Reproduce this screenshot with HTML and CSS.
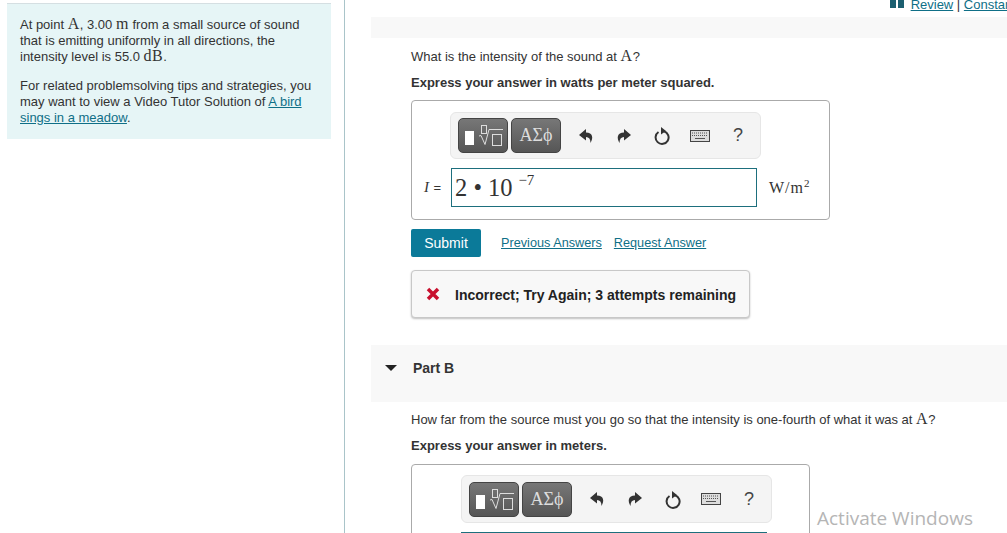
FILE: index.html
```html
<!DOCTYPE html>
<html lang="en">
<head>
    <meta charset="UTF-8">
    <meta name="viewport" content="width=device-width, initial-scale=1.0">
    <title>Part A and Part B</title>
    <link rel="stylesheet" href="styles.css">
</head>
<body>
    <aside class="sidebar">
        <div class="intro">
            <p>At point <span class="math">A</span>, 3.00 <span class="math">m</span> from a small source of sound that is emitting uniformly in all directions, the intensity level is 55.0 <span class="math">dB</span>.</p>
            <p>For related problemsolving tips and strategies, you may want to view a Video Tutor Solution of <a href="#">A bird sings in a meadow</a>.</p>
        </div>
    </aside>

    <main class="content">
        <div class="top-links">
            <svg class="book-icon" width="14" height="9" viewBox="0 0 14 9"><path d="M0 0h6v9H0zM8 0h6v9H8z" fill="#1c5f70"/></svg>
            <a href="#">Review</a> | <a href="#">Constants</a>
        </div>
        <div class="part-bar part-bar-top"></div>

        <section class="part-body">
            <p class="question">What is the intensity of the sound at <span class="math">A</span>?</p>
            <p class="instruction">Express your answer in watts per meter squared.</p>

            <div class="answer-box answer-box-a">
                <div class="toolbar">
                    <button class="tool-btn">
                        <svg width="48" height="33" viewBox="0 0 48 33">
                            <rect x="6" y="12" width="9" height="14" fill="#fff"/>
                            <rect x="22.500" y="6.500" width="5" height="8" fill="none" stroke="#ddd"/>
                            <path d="M20 17l2-.5 4 9 4-15h14" fill="none" stroke="#ddd"/>
                            <rect x="33.500" y="15.500" width="9" height="11" fill="none" stroke="#ddd"/>
                        </svg>
                    </button>
                    <button class="tool-btn tool-btn-text">ΑΣϕ</button>
                    <div class="tool-icons">
                        <span class="tool-icon"><svg width="16" height="16" viewBox="0 0 16 16"><path d="M8 1L1 7l7 5.500V9c3 0 4.500 2 4.500 6C15.500 10 15 4.500 8 4.500z" fill="#333"/></svg></span>
                        <span class="tool-icon"><svg width="16" height="16" viewBox="0 0 16 16"><path d="M8 1l7 6-7 5.500V9c-3 0-4.500 2-4.500 6C.5 10 1 4.500 8 4.500z" fill="#333"/></svg></span>
                        <span class="tool-icon"><svg width="18" height="19" viewBox="0 0 18 19"><path d="M11 5.200A6.500 6.500 0 1 1 5.500 6" fill="none" stroke="#333" stroke-width="2"/><path d="M8 1l5 4-5 3.500z" fill="#333"/></svg></span>
                        <span class="tool-icon"><svg width="20" height="12" viewBox="0 0 20 12"><rect x=".5" y=".5" width="19" height="11" fill="#ddd" stroke="#444"/><path d="M2 3h16M2 5.500h16" stroke="#555" stroke-dasharray="1 1"/><path d="M5 8.500h10" stroke="#555"/></svg></span>
                        <span class="tool-icon help">?</span>
                    </div>
                </div>
                <div class="answer-row">
                    <span class="var-label"><i>I</i> =</span>
                    <div class="answer-input">2 • 10<sup>− 7</sup></div>
                    <span class="unit">W/m<sup>2</sup></span>
                </div>
            </div>

            <div class="actions">
                <button class="submit">Submit</button>
                <a href="#">Previous Answers</a>
                <a href="#">Request Answer</a>
            </div>

            <div class="feedback">
                <svg width="14" height="14" viewBox="0 0 14 14"><path d="M2 2l10 10M12 2L2 12" stroke="#c8102e" stroke-width="3.500"/></svg>
                <span>Incorrect; Try Again; 3 attempts remaining</span>
            </div>
        </section>

        <div class="part-bar part-bar-b">
            <span class="caret"></span>
            <span class="part-title">Part B</span>
        </div>

        <section class="part-body part-body-b">
            <p class="question">How far from the source must you go so that the intensity is one-fourth of what it was at <span class="math">A</span>?</p>
            <p class="instruction">Express your answer in meters.</p>

            <div class="answer-box answer-box-b">
                <div class="toolbar">
                    <button class="tool-btn">
                        <svg width="48" height="33" viewBox="0 0 48 33">
                            <rect x="6" y="12" width="9" height="14" fill="#fff"/>
                            <rect x="22.500" y="6.500" width="5" height="8" fill="none" stroke="#ddd"/>
                            <path d="M20 17l2-.5 4 9 4-15h14" fill="none" stroke="#ddd"/>
                            <rect x="33.500" y="15.500" width="9" height="11" fill="none" stroke="#ddd"/>
                        </svg>
                    </button>
                    <button class="tool-btn tool-btn-text">ΑΣϕ</button>
                    <div class="tool-icons">
                        <span class="tool-icon"><svg width="16" height="16" viewBox="0 0 16 16"><path d="M8 1L1 7l7 5.500V9c3 0 4.500 2 4.500 6C15.500 10 15 4.500 8 4.500z" fill="#333"/></svg></span>
                        <span class="tool-icon"><svg width="16" height="16" viewBox="0 0 16 16"><path d="M8 1l7 6-7 5.500V9c-3 0-4.500 2-4.500 6C.5 10 1 4.500 8 4.500z" fill="#333"/></svg></span>
                        <span class="tool-icon"><svg width="18" height="19" viewBox="0 0 18 19"><path d="M11 5.200A6.500 6.500 0 1 1 5.500 6" fill="none" stroke="#333" stroke-width="2"/><path d="M8 1l5 4-5 3.500z" fill="#333"/></svg></span>
                        <span class="tool-icon"><svg width="20" height="12" viewBox="0 0 20 12"><rect x=".5" y=".5" width="19" height="11" fill="#ddd" stroke="#444"/><path d="M2 3h16M2 5.500h16" stroke="#555" stroke-dasharray="1 1"/><path d="M5 8.500h10" stroke="#555"/></svg></span>
                        <span class="tool-icon help">?</span>
                    </div>
                </div>
                <div class="answer-row">
                    <div class="answer-input"></div>
                </div>
            </div>
        </section>
    </main>

    <div class="watermark">Activate Windows</div>
</body>
</html>
```

FILE: styles.css
```css
html, body {
    height: 533px;
    overflow: hidden;
}

body {
    margin: 0;
    display: flex;
    font-family: "Liberation Sans", Arial, sans-serif;
    font-size: 13px;
    color: #333;
    background-color: #fff;
}

p {
    margin: 0;
}

a {
    color: #0f6f87;
}

.math {
    font-family: "Liberation Serif", serif;
    font-size: 16px;
    letter-spacing: 0.5px;
    line-height: 0;
}

/* Left column */
.sidebar {
    box-sizing: border-box;
    flex: 0 0 345px;
    height: 533px;
    padding: 3px 13px 0 7px;
    border-right: 1px solid #a9c4c9;
}

.intro {
    box-sizing: border-box;
    height: 136px;
    padding: 13px 13px 0;
    background-color: #e6f5f6;
    border-top: 1px solid #d5dfe2;
    line-height: 16px;
}

.intro p + p {
    margin-top: 13px;
}

/* Right column */
.content {
    flex: 1;
    min-width: 0;
    padding-left: 26px;
    overflow: hidden;
}

.top-links {
    height: 15px;
    margin-top: -2px;
    padding-left: 519px;
    font-size: 13px;
    line-height: 14px;
    white-space: nowrap;
}

.book-icon {
    margin-right: 3px;
    vertical-align: 1px;
}

.part-bar {
    background-color: #f8f8f8;
}

.part-bar-top {
    height: 21px;
    margin-top: 4px;
}

.part-bar-b {
    display: flex;
    align-items: center;
    height: 57px;
    margin-top: 27px;
    padding-bottom: 11px;
    box-sizing: border-box;
}

.caret {
    width: 0;
    height: 0;
    margin-left: 14px;
    border-left: 6px solid transparent;
    border-right: 6px solid transparent;
    border-top: 6px solid #222;
}

.part-title {
    margin-left: 16px;
    font-size: 14px;
    font-weight: bold;
    color: #333;
}

.part-body {
    padding: 11px 0 0 40px;
}

.part-body-b {
    padding-top: 10px;
}

.question {
    line-height: 16px;
}

.instruction {
    margin-top: 10px;
    font-weight: bold;
    line-height: 16px;
}

/* Answer box */
.answer-box {
    box-sizing: border-box;
    margin-top: 9px;
    border: 1px solid #aaa;
    border-radius: 4px;
}

.answer-box-a {
    width: 419px;
    height: 120px;
    padding: 11px 0 0 38px;
}

.answer-box-b {
    width: 399px;
    height: 140px;
    margin-top: 10px;
    padding: 10px 0 0 49px;
}

.answer-box-b .toolbar {
    height: 48px;
}

.toolbar {
    box-sizing: border-box;
    display: flex;
    align-items: center;
    gap: 3px;
    width: 311px;
    height: 47px;
    padding-left: 7px;
    background-color: #f4f4f4;
    border: 1px solid #e6e6e6;
    border-radius: 6px;
}

.tool-btn {
    box-sizing: border-box;
    display: flex;
    align-items: center;
    justify-content: center;
    width: 50px;
    height: 35px;
    padding: 0;
    color: #ddd;
    background: linear-gradient(#777, #565656);
    border: 1px solid #444;
    border-radius: 5px;
}

.tool-btn-text {
    font-family: "Liberation Serif", serif;
    font-size: 18px;
}

.tool-icons {
    display: flex;
    align-items: center;
    margin-left: 3px;
}

.tool-icon {
    display: flex;
    align-items: center;
    justify-content: center;
    width: 38px;
}

.help {
    font-size: 18px;
    color: #444;
}

.answer-row {
    display: flex;
    align-items: center;
    margin-top: 9px;
}

.answer-box-a .answer-row {
    margin-left: -26px;
}

.var-label {
    width: 27px;
    font-size: 13px;
    word-spacing: 1px;
}

.var-label i {
    font-family: "Liberation Serif", serif;
    font-size: 15px;
}

.answer-input {
    box-sizing: border-box;
    width: 306px;
    height: 39px;
    padding-left: 3px;
    font-family: "Liberation Serif", serif;
    font-size: 24.5px;
    line-height: 38px;
    color: #333;
    border: 1px solid #1d6f7d;
}

.answer-input sup {
    font-size: 15px;
    line-height: 0;
    vertical-align: 11px;
    margin-left: 6px;
    word-spacing: -4px;
}

.unit {
    margin-left: 12px;
    font-family: "Liberation Serif", serif;
    font-size: 16px;
    letter-spacing: 1px;
}

.unit sup {
    font-size: 11px;
    line-height: 0;
}

/* Submit row */
.actions {
    display: flex;
    align-items: center;
    margin-top: 9px;
    font-size: 12.7px;
}

.actions a + a {
    margin-left: 12px;
}

.submit {
    width: 70px;
    height: 28px;
    margin-right: 20px;
    padding: 0;
    font-family: inherit;
    font-size: 14px;
    color: #fff;
    background-color: #0b7a99;
    border: none;
    border-radius: 2px;
}

.feedback {
    box-sizing: border-box;
    display: flex;
    align-items: center;
    gap: 15px;
    width: 339px;
    height: 48px;
    margin-top: 13px;
    padding-left: 14px;
    font-size: 14px;
    font-weight: bold;
    color: #222;
    background-color: #f8f8f8;
    border: 1px solid #c8c8c8;
    border-radius: 4px;
    box-shadow: 0 1px 2px rgba(0, 0, 0, 0.25);
}

.feedback span {
    padding-top: 2px;
}

/* Sits over the page, bottom right */
.watermark {
    position: absolute;
    left: 817px;
    top: 505px;
    font-family: "Open Sans", sans-serif;
    font-size: 19px;
    color: #b5b5b5;
}
```
